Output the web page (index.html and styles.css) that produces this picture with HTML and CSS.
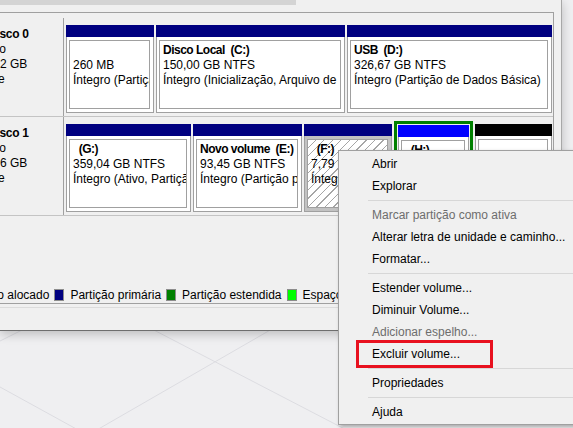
FILE: index.html
```html
<!DOCTYPE html>
<html lang="pt-BR">
<head>
<meta charset="utf-8">
<title>Gerenciamento de Disco</title>
<link rel="stylesheet" href="styles.css">
</head>
<body>
<div class="window">
  <div class="topbar"><div class="thumb"></div></div>
  <div class="pane">
    <div class="disk">
      <div class="label">
        <div class="lbl-inner">
          <div class="name">Disco 0</div>
          <div>Básico</div>
          <div>476,92 GB</div>
          <div>Online</div>
        </div>
      </div>
      <div class="parts">
        <div class="part w-efi"><div class="bar navy"></div><div class="body"><div class="box"><div> </div><div>260 MB</div><div>Íntegro (Partição de Sistema EFI)</div></div></div></div>
        <div class="part w-c"><div class="bar navy"></div><div class="body"><div class="box"><div class="b">Disco Local  (C:)</div><div>150,00 GB NTFS</div><div>Íntegro (Inicialização, Arquivo de Paginação)</div></div></div></div>
        <div class="part w-d"><div class="bar navy"></div><div class="body"><div class="box"><div class="b">USB  (D:)</div><div>326,67 GB NTFS</div><div>Íntegro (Partição de Dados Básica)</div></div></div></div>
      </div>
    </div>
    <div class="disk">
      <div class="label">
        <div class="lbl-inner">
          <div class="name">Disco 1</div>
          <div>Básico</div>
          <div>465,76 GB</div>
          <div>Online</div>
        </div>
      </div>
      <div class="parts">
        <div class="part w-g"><div class="bar navy"></div><div class="body"><div class="box"><div class="b">  (G:)</div><div>359,04 GB NTFS</div><div>Íntegro (Ativo, Partição primária)</div></div></div></div>
        <div class="part w-e"><div class="bar navy"></div><div class="body"><div class="box"><div class="b">Novo volume  (E:)</div><div>93,45 GB NTFS</div><div>Íntegro (Partição primária)</div></div></div></div>
        <div class="part w-f"><div class="bar navy"></div><div class="body dark"><div class="box hatch"><div class="b">  (F:)</div><div>7,79 GB NTFS</div><div>Íntegro (Partição primária)</div></div></div></div>
        <div class="part w-h sel"><div class="bar blue"></div><div class="body"><div class="box"><div class="b">  (H:)</div><div>4,68 GB NTFS</div><div>Íntegro (Partição lógica)</div></div></div></div>
        <div class="part w-u"><div class="bar black"></div><div class="body"><div class="box"><div> </div><div>0,80 GB</div><div>Não alocado</div></div></div></div>
      </div>
    </div>
    <div class="legend">
      <span class="sw sw-black"></span><span class="lt">Não alocado</span>
      <span class="sw sw-navy"></span><span class="lt">Partição primária</span>
      <span class="sw sw-green"></span><span class="lt">Partição estendida</span>
      <span class="sw sw-lime"></span><span class="lt">Espaço livre</span>
    </div>
  </div>
  <div class="status"><div class="sline"></div></div>
</div>
<svg class="desktop" width="573" height="97" viewBox="0 0 573 97" aria-hidden="true">
  <g stroke="#dcdce1" stroke-width="1" fill="none">
    <line x1="150" y1="-3" x2="360" y2="106"/>
    <line x1="272" y1="-2" x2="95" y2="100"/>
    <line x1="0" y1="56" x2="80" y2="100"/>
    <line x1="0" y1="10" x2="24" y2="-2"/>
  </g>
</svg>

<div class="menu">
  <div class="mi">Abrir</div>
  <div class="mi">Explorar</div>
  <div class="sep"></div>
  <div class="mi dis">Marcar partição como ativa</div>
  <div class="mi">Alterar letra de unidade e caminho...</div>
  <div class="mi">Formatar...</div>
  <div class="sep"></div>
  <div class="mi">Estender volume...</div>
  <div class="mi">Diminuir Volume...</div>
  <div class="mi dis">Adicionar espelho...</div>
  <div class="mi">Excluir volume...</div>
  <div class="sep"></div>
  <div class="mi">Propriedades</div>
  <div class="sep"></div>
  <div class="mi">Ajuda</div>
</div>
<div class="highlight"></div>
</body>
</html>
```
FILE: styles.css
```css
html, body {
  margin: 0;
  padding: 0;
}
body {
  width: 573px;
  height: 428px;
  overflow: hidden;
  position: relative;
  background: #efeff1;
  font-family: "Liberation Sans", Arial, sans-serif;
  font-size: 12px;
  color: #000;
}

.window {
  position: relative;
  z-index: 1;
  width: 562px;
  height: 331px;
  box-sizing: border-box;
  background: #f0f0f0;
  border-right: 1px solid #a8a8a8;
  border-bottom: 1px solid #6e6e6e;
  box-shadow: 0 3px 10px rgba(0, 0, 0, 0.22);
  display: flex;
  flex-direction: column;
}

.topbar {
  height: 12px;
  flex: none;
}
.thumb {
  width: 296px;
  height: 5px;
  background: #d4d4d4;
}

.pane {
  flex: none;
  width: 554px;
  height: 292px;
  box-sizing: border-box;
  border-top: 1px solid #a0a0a0;
  border-right: 1px solid #a0a0a0;
  border-bottom: 1px solid #a0a0a0;
  padding-top: 5px;
  display: flex;
  flex-direction: column;
}

.disk {
  flex: none;
  display: flex;
  height: 99px;
  box-sizing: border-box;
  border-bottom: 1px solid #c4c4c4;
}

.label {
  flex: none;
  width: 64px;
  box-sizing: border-box;
  border-right: 1px solid #a0a0a0;
  overflow: hidden;
  padding-top: 9px;
  line-height: 15px;
  white-space: nowrap;
}
.lbl-inner {
  margin-left: -30px;
}
.name {
  font-weight: bold;
  padding-left: 18px;
  letter-spacing: -0.3px;
}

.parts {
  display: flex;
  align-items: flex-start;
  gap: 2px;
  padding: 7px 0 0 2px;
}

.part {
  flex: none;
  height: 88px;
  box-sizing: border-box;
  display: flex;
  flex-direction: column;
}
.w-efi { width: 88px; }
.w-c { width: 189px; }
.w-d { width: 205px; }
.w-g { width: 125px; }
.w-e { width: 109px; }
.w-f { width: 88px; }
.w-h { width: 79px; }
.w-u { width: 77px; }

.part.sel {
  margin-top: -3px;
  height: 94px;
  border: 3px solid #008000;
  padding: 1px;
  background: #f0f0f0;
}

.bar {
  flex: none;
  height: 12px;
}
.navy { background: #000080; }
.blue { background: #0000ff; }
.black { background: #000; }

.body {
  flex: 1;
  min-height: 0;
  display: flex;
  background: #fff;
  border: 1px solid #a0a0a0;
  border-top: none;
  padding: 3px 3px 3px 2px;
}
.body.dark {
  background: #c2c2c2;
}

.box {
  flex: 1;
  min-width: 0;
  overflow: hidden;
  background: #fff;
  border: 1px solid #a0a0a0;
  padding: 2px 3px;
  line-height: 15px;
  white-space: pre;
}
.box.hatch {
  background: repeating-linear-gradient(135deg, #ffffff 0 5px, #a6a6a6 5px 6px);
}
.b {
  font-weight: bold;
  letter-spacing: -0.5px;
}

.legend {
  margin-top: auto;
  height: 17px;
  display: flex;
  align-items: center;
  white-space: nowrap;
  margin-left: -34px;
}
.sw {
  flex: none;
  width: 10px;
  height: 12px;
  box-sizing: border-box;
  border: 1px solid #8c8c8c;
  margin-right: 6px;
}
.lt {
  margin-right: 5px;
}
.sw-black { background: #000; }
.sw-navy { background: #000080; }
.sw-green { background: #008000; }
.sw-lime { background: #00ff00; }

.status {
  flex: 1;
}
.sline {
  margin-top: 3px;
  height: 1px;
  background: #dcdcdc;
}

.desktop {
  display: block;
}

.menu {
  position: absolute;
  z-index: 2;
  left: 338px;
  top: 150px;
  width: 250px;
  box-sizing: border-box;
  background: #f0f0f0;
  border: 1px solid #a0a0a0;
  box-shadow: 2px 2px 4px rgba(0, 0, 0, 0.3);
  padding: 2px 0 1px;
}
.mi {
  height: 22px;
  line-height: 22px;
  padding-left: 33px;
  white-space: nowrap;
}
.mi.dis {
  color: #6d6d6d;
}
.sep {
  height: 1px;
  background: #d7d7d7;
  margin: 3px 0 3px 29px;
}

.highlight {
  position: absolute;
  z-index: 3;
  left: 356px;
  top: 340px;
  width: 137px;
  height: 28px;
  box-sizing: border-box;
  border: 3px solid #e8111f;
}
```
